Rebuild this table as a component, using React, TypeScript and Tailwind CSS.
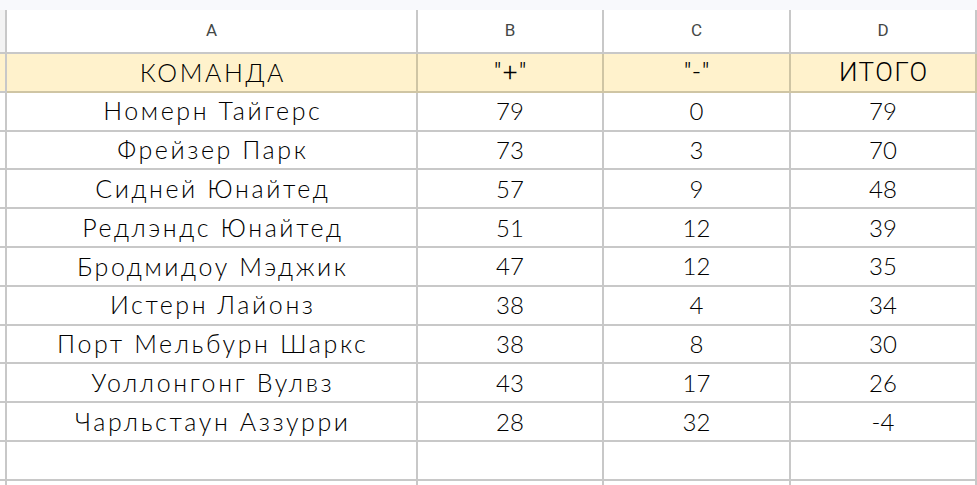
import React from "react";

interface Team {
  name: string;
  plus: number;
  minus: number;
  total: number;
}

const teams: Team[] = [
  { name: "Номерн Тайгерс", plus: 79, minus: 0, total: 79 },
  { name: "Фрейзер Парк", plus: 73, minus: 3, total: 70 },
  { name: "Сидней Юнайтед", plus: 57, minus: 9, total: 48 },
  { name: "Редлэндс Юнайтед", plus: 51, minus: 12, total: 39 },
  { name: "Бродмидоу Мэджик", plus: 47, minus: 12, total: 35 },
  { name: "Истерн Лайонз", plus: 38, minus: 4, total: 34 },
  { name: "Порт Мельбурн Шаркс", plus: 38, minus: 8, total: 30 },
  { name: "Уоллонгонг Вулвз", plus: 43, minus: 17, total: 26 },
  { name: "Чарльстаун Аззурри", plus: 28, minus: 32, total: -4 },
];

const round = { fontFamily: "Lato, 'Noto Sans', sans-serif" };
const plain = { fontFamily: "Roboto, 'Liberation Sans', Arial, sans-serif" };

const cell = "flex items-center justify-center border-r-2 border-b-2 border-[#c8c8c8]";
const widths = ["w-[411px]", "w-[186px]", "w-[187px]", "flex-1"];

function Row({ cells, yellow }: { cells: React.ReactNode[]; yellow?: boolean }) {
  return (
    <div className={`flex h-[38.8px] ${yellow ? "bg-[#fff2cc]" : "bg-white"}`}>
      <div className="w-[7px] border-r-2 border-b-2 border-[#c8c8c8]" />
      {cells.map((c, i) => (
        <div
          key={i}
          className={`${cell} ${widths[i]} ${yellow ? "border-[#cfc5a4]" : ""} text-black`}
        >
          {c}
        </div>
      ))}
    </div>
  );
}

const Name = ({ children }: { children: React.ReactNode }) => (
  <span className="text-[25px] font-light tracking-[2.6px] pl-[2.6px]" style={round}>
    {children}
  </span>
);

const Num = ({ children }: { children: React.ReactNode }) => (
  <span className="text-[24px] font-light" style={round}>
    {children}
  </span>
);

const Plain = ({ children }: { children: React.ReactNode }) => (
  <span className="text-[26px] font-light tracking-[1.5px] pl-[1.5px]" style={plain}>
    {children}
  </span>
);

export default function App() {
  return (
    <div className="w-[977px] h-[485px] overflow-hidden bg-white">
      <div className="h-[10px] bg-[#f8f9fc]" />
      <div className="flex h-[44px] bg-white">
        <div className="w-[7px] bg-[#f3f3f3] border-r-2 border-b-2 border-[#c8c8c8]" />
        {["A", "B", "C", "D"].map((l, i) => (
          <div
            key={l}
            className={`${cell} ${widths[i]} text-[17px] text-[#444746]`}
            style={plain}
          >
            {l}
          </div>
        ))}
      </div>
      <Row
        yellow
        cells={[
          <Name>КОМАНДА</Name>,
          <Plain>"+"</Plain>,
          <Plain>"-"</Plain>,
          <Plain>ИТОГО</Plain>,
        ]}
      />
      {teams.map((t) => (
        <Row
          key={t.name}
          cells={[<Name>{t.name}</Name>, <Num>{t.plus}</Num>, <Num>{t.minus}</Num>, <Num>{t.total}</Num>]}
        />
      ))}
      <Row cells={["", "", "", ""]} />
      <Row cells={["", "", "", ""]} />
    </div>
  );
}
